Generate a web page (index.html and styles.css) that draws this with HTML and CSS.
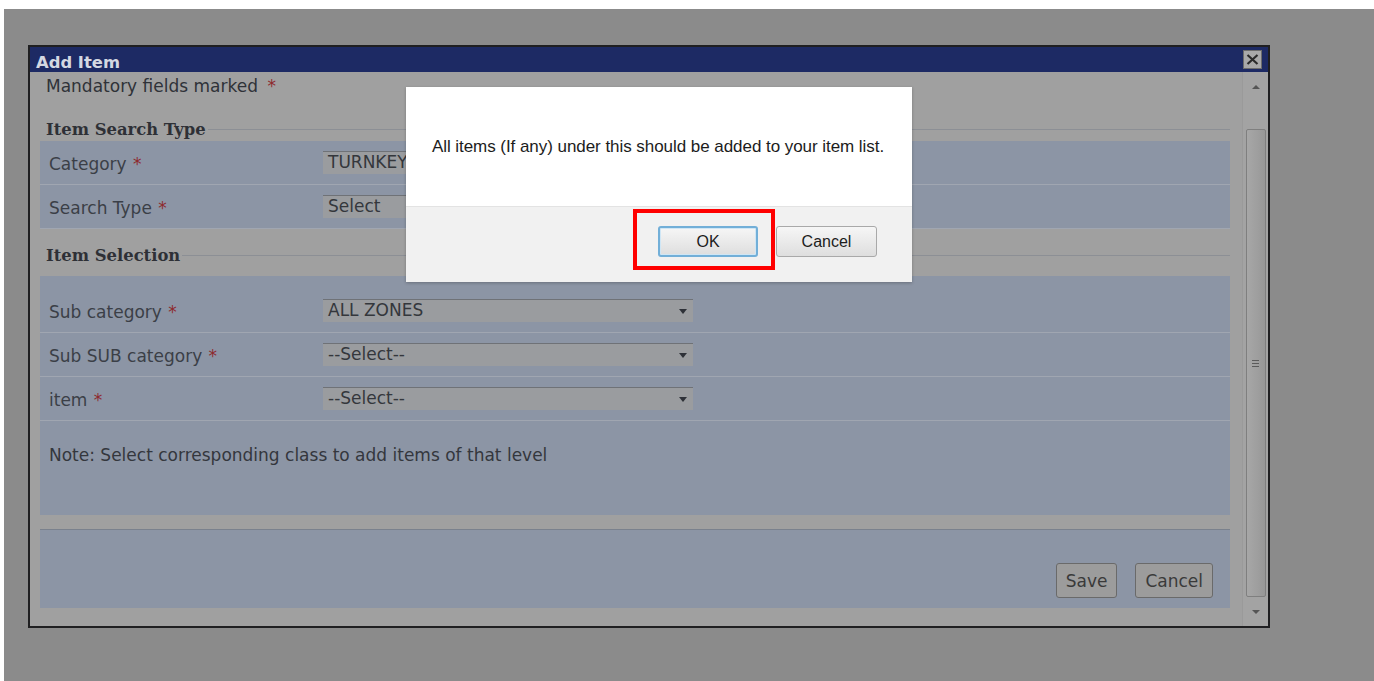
FILE: index.html
```html
<!DOCTYPE html>
<html lang="en">
<head>
<meta charset="utf-8">
<title>Add Item</title>
<link rel="stylesheet" href="styles.css">
</head>
<body>
<div class="screen">
  <div class="dialog">
    <div class="titlebar">
      <span class="title">Add Item</span>
      <span class="close" aria-label="Close">
        <svg width="13" height="11" viewBox="0 0 13 11"><path d="M1.5 1 L11.5 10 M11.5 1 L1.5 10" stroke="#2b2b2b" stroke-width="2.2" fill="none"/></svg>
      </span>
    </div>
    <div class="body">
      <div class="content">
        <p class="mandatory">Mandatory fields marked <span class="req">*</span></p>

        <div class="group">
          <div class="legend"><span>Item Search Type</span></div>
          <div class="panel">
            <div class="row">
              <label class="label">Category <span class="req">*</span></label>
              <div class="select short">TURNKEY</div>
            </div>
            <div class="row">
              <label class="label">Search Type <span class="req">*</span></label>
              <div class="select short">Select</div>
            </div>
          </div>
        </div>

        <div class="group second">
          <div class="legend"><span>Item Selection</span></div>
          <div class="panel">
            <div class="row">
              <label class="label">Sub category <span class="req">*</span></label>
              <div class="select">ALL ZONES<span class="caret"></span></div>
            </div>
            <div class="row">
              <label class="label">Sub SUB category <span class="req">*</span></label>
              <div class="select">--Select--<span class="caret"></span></div>
            </div>
            <div class="row">
              <label class="label">item <span class="req">*</span></label>
              <div class="select">--Select--<span class="caret"></span></div>
            </div>
            <div class="note">Note: Select corresponding class to add items of that level</div>
          </div>
        </div>

        <div class="footer">
          <button class="btn">Save</button>
          <button class="btn">Cancel</button>
        </div>
      </div>
      <div class="scrollbar">
        <span class="arrow up"></span>
        <div class="thumb"><span class="grip"></span></div>
        <span class="arrow down"></span>
      </div>
    </div>
  </div>

  <div class="confirm">
    <div class="confirm-msg">All items (If any) under this should be added to your item list.</div>
    <div class="confirm-actions">
      <button class="cbtn ok">OK</button>
      <button class="cbtn">Cancel</button>
    </div>
    <span class="highlight"></span>
  </div>
</div>
</body>
</html>
```

FILE: styles.css
```css
html, body {
  margin: 0;
  padding: 0;
  background: #ffffff;
}

.screen {
  position: relative;
  margin: 9px 0 0 4px;
  height: 672px;
  background: #8b8b8b;
  padding: 36px 0 0 24px;
  box-sizing: border-box;
  font-family: "DejaVu Sans", Verdana, sans-serif;
}

/* dimmed dialog underneath the confirm box */
.dialog {
  width: 1242px;
  height: 583px;
  box-sizing: border-box;
  border: 2px solid #1f1f21;
  background: #a0a0a0;
  display: flex;
  flex-direction: column;
}

.titlebar {
  height: 25px;
  flex: none;
  background: #1d2a64;
  display: flex;
  align-items: center;
  justify-content: space-between;
  padding: 0 6px 0 6px;
}

.title {
  color: #d4d8e2;
  font-weight: bold;
  font-size: 16.4px;
  line-height: 25px;
  padding-top: 5px;
}

.close {
  width: 19px;
  height: 19px;
  box-sizing: border-box;
  background: #a9a9a9;
  border: 1px solid #6c6c6c;
  display: flex;
  align-items: center;
  justify-content: center;
}

.body {
  flex: 1;
  display: flex;
  min-height: 0;
}

.content {
  flex: 1;
  padding: 2px 12px 0 10px;
  display: flex;
  flex-direction: column;
}

.mandatory {
  margin: 0;
  font-size: 17px;
  color: #2f3238;
  line-height: 24px;
  padding-left: 6px;
  height: 24px;
}

.req {
  color: #8e2a2e;
  margin-left: 4px;
}

.group {
  margin-top: 19px;
}

.group.second {
  margin-top: 14px;
}

.legend {
  display: flex;
  align-items: center;
  height: 24px;
  padding-left: 6px;
}

.legend span {
  font-family: "DejaVu Serif", Georgia, serif;
  font-weight: bold;
  font-size: 16.4px;
  color: #2e3036;
  margin-right: 2px;
}

.legend::after {
  content: "";
  flex: 1;
  height: 1px;
  background: #8c8f95;
}

.panel {
  background: #8c95a5;
}

.group.second .panel {
  margin-top: 9px;
  padding-top: 13px;
  height: 239px;
  box-sizing: border-box;
}

.row {
  height: 43px;
  border-bottom: 1px solid #a0a6b1;
  display: flex;
  align-items: center;
}

.label {
  width: 274px;
  padding-left: 9px;
  font-size: 17px;
  color: #3b3f47;
  line-height: 20px;
  padding-top: 3px;
  flex: none;
}

.label .req {
  margin-left: 1px;
}

.select {
  position: relative;
  width: 370px;
  height: 23px;
  box-sizing: border-box;
  background: #9a9c9f;
  border-top: 1px solid #6f7277;
  color: #34373c;
  font-size: 17px;
  line-height: 20px;
  padding-left: 5px;
  margin-top: -1px;
}

.select.short {
  width: 90px;
}

.caret {
  position: absolute;
  right: 6px;
  top: 9px;
  width: 0;
  height: 0;
  border-left: 4px solid transparent;
  border-right: 4px solid transparent;
  border-top: 5px solid #2e3138;
}

.note {
  padding: 24px 0 0 9px;
  font-size: 17px;
  color: #34373d;
}

.footer {
  margin-top: 14px;
  height: 79px;
  background: #8c95a5;
  border-top: 1px solid #7a818d;
  display: flex;
  justify-content: flex-end;
  align-items: flex-start;
  gap: 18px;
  padding: 33px 17px 0 0;
  box-sizing: border-box;
}

.btn {
  font-family: "DejaVu Sans", Verdana, sans-serif;
  font-size: 17px;
  color: #3a3a3a;
  background: #9c9c9c;
  border: 1px solid #6a6a6a;
  border-radius: 3px;
  height: 35px;
  padding: 0 9px;
}

.scrollbar {
  width: 26px;
  flex: none;
  background: #a3a3a3;
  display: flex;
  flex-direction: column;
  align-items: center;
  padding: 13px 0 0;
  box-sizing: border-box;
  border-left: 1px solid #9a9a9a;
}

.arrow {
  width: 0;
  height: 0;
  border-left: 4px solid transparent;
  border-right: 4px solid transparent;
  flex: none;
}

.arrow.up {
  border-bottom: 4px solid #555;
}

.arrow.down {
  border-top: 4px solid #555;
  margin-top: 13px;
}

.thumb {
  margin-top: 40px;
  width: 20px;
  height: 468px;
  box-sizing: border-box;
  border: 1px solid #7f7f7f;
  border-radius: 2px;
  background: linear-gradient(90deg, #a7a7a7, #9e9e9e 60%, #979797);
  display: flex;
  align-items: center;
  justify-content: center;
  flex: none;
}

.grip {
  width: 7px;
  height: 7px;
  background: repeating-linear-gradient(180deg, #5b5b5b 0 1px, transparent 1px 3px);
}

/* confirm box */
.confirm {
  position: absolute;
  left: 402px;
  top: 78px;
  width: 506px;
  height: 195px;
  background: #ffffff;
  box-shadow: 0 1px 3px rgba(0, 0, 0, 0.25);
  display: flex;
  flex-direction: column;
  font-family: "Liberation Sans", Arial, sans-serif;
}

.confirm-msg {
  height: 119px;
  display: flex;
  align-items: center;
  justify-content: center;
  font-size: 17px;
  letter-spacing: -0.05px;
  color: #1c1c1c;
  padding-right: 2px;
}

.confirm-actions {
  flex: 1;
  background: #f1f1f1;
  border-top: 1px solid #e3e3e3;
  display: flex;
  justify-content: flex-end;
  align-items: flex-start;
  gap: 18px;
  padding: 19px 35px 0 0;
}

.cbtn {
  font-family: "Liberation Sans", Arial, sans-serif;
  font-size: 16px;
  color: #1d1d1d;
  width: 101px;
  height: 31px;
  border: 1px solid #a9a9a9;
  border-radius: 3px;
  background: linear-gradient(180deg, #f6f6f6, #dedede);
}

.cbtn.ok {
  width: 100px;
  border: 2px solid #72afd8;
  box-shadow: inset 0 0 0 1px #cfe6f5;
}

.highlight {
  position: absolute;
  left: 227px;
  top: 122px;
  width: 142px;
  height: 61px;
  box-sizing: border-box;
  border: 4px solid #ff0000;
}
```
